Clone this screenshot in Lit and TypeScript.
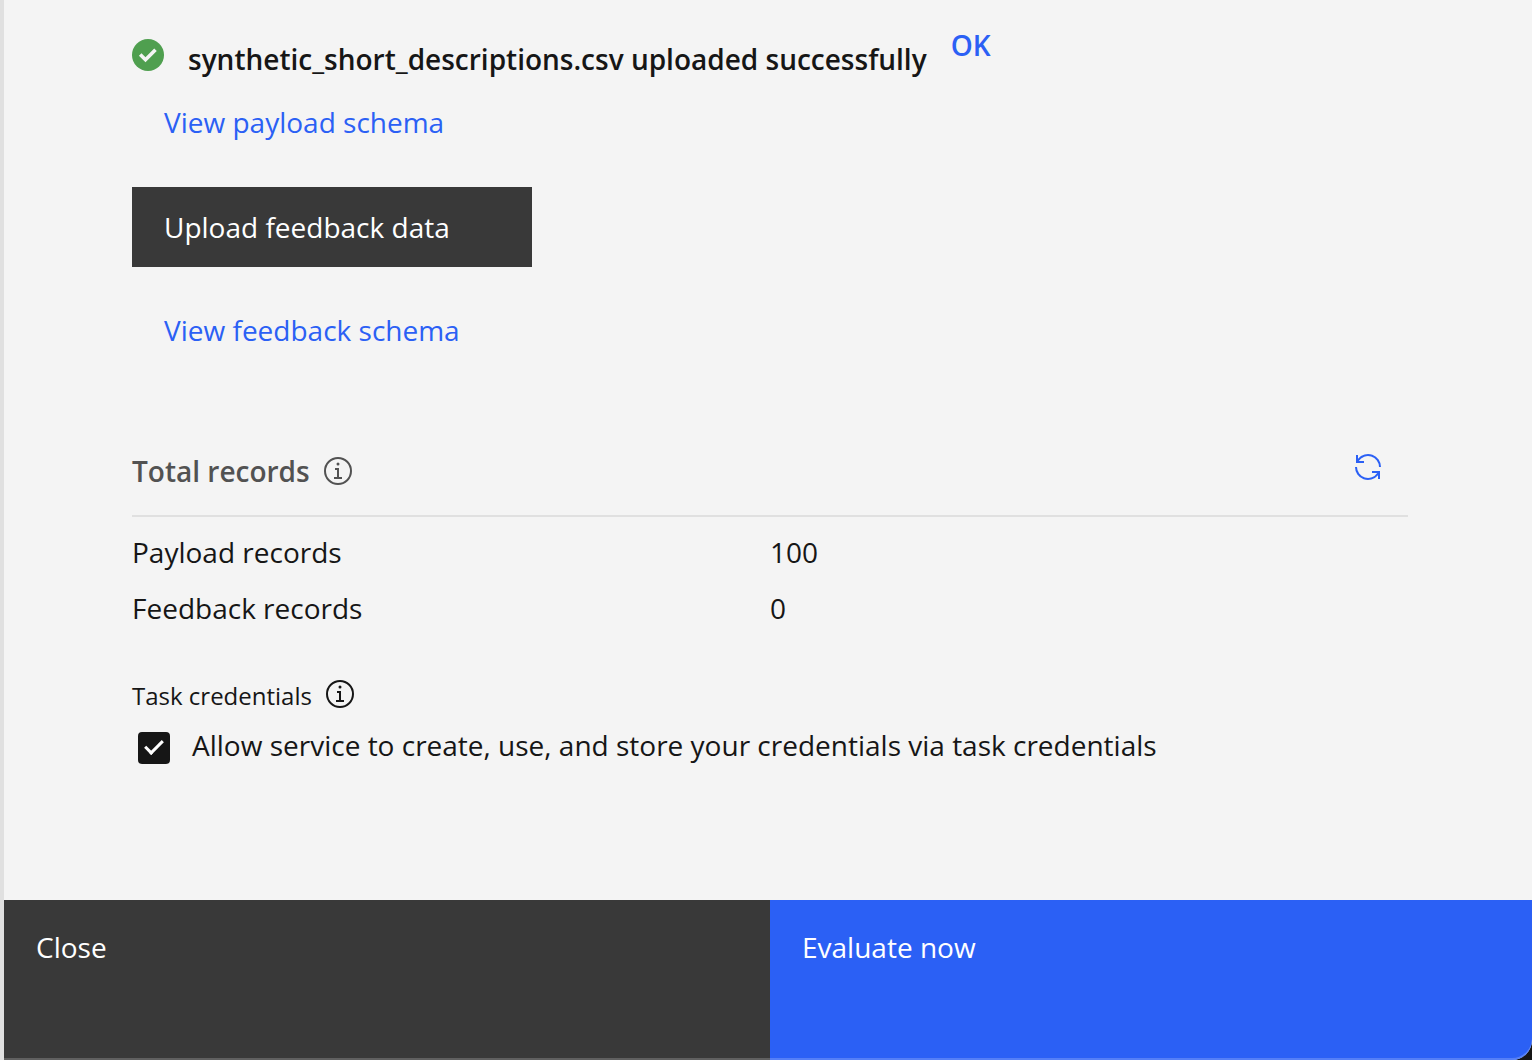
import { LitElement, html, css } from "lit";
import { customElement, property, state } from "lit/decorators.js";

@customElement("info-icon")
class InfoIcon extends LitElement {
  static styles = css`
    :host { display: block; width: 32px; height: 32px; }
    .icon { display: block; width: 32px; height: 32px; fill: currentColor; }
  `;
  render() {
    return html`<svg class="icon" viewBox="0 0 32 32" aria-hidden="true">
      <path d="M17 22v-9h-4v2h2v7h-3v2h8v-2zM16 7.5a1.5 1.5 0 1 0 1.5 1.5A1.5 1.5 0 0 0 16 7.5z" />
      <path d="M16 30a14 14 0 1 1 14-14 14 14 0 0 1-14 14zm0-26a12 12 0 1 0 12 12A12 12 0 0 0 16 4z" />
    </svg>`;
  }
}

@customElement("records-table")
class RecordsTable extends LitElement {
  @property({ attribute: false }) rows: { label: string; count: number }[] = [];

  static styles = css`
    :host { display: block; }
    .table { width: 100%; table-layout: fixed; border-collapse: collapse; }
    .cell { width: 50%; height: 56px; padding: 0; text-align: left; font-weight: 400; line-height: 36px; }
  `;
  render() {
    return html`<table class="table" aria-label="Total records">
      <tbody>
        ${this.rows.map(
          (r) => html`<tr><th class="cell" scope="row">${r.label}</th><td class="cell">${r.count}</td></tr>`
        )}
      </tbody>
    </table>`;
  }
}

@customElement("app-root")
class AppRoot extends LitElement {
  @state() private allowed = true;

  private records = [
    { label: "Payload records", count: 100 },
    { label: "Feedback records", count: 0 },
  ];

  static styles = css`
    :host { display: block; background: #161616; }
    *, *::before { box-sizing: border-box; }
    .panel {
      position: relative;
      display: flex;
      flex-direction: column;
      min-height: 100vh;
      border-left: 4px solid #e0e0e0;
      border-bottom-right-radius: 20px;
      overflow: hidden;
      background: #f4f4f4;
      color: #161616;
      font: 400 28px/36px "Open Sans", sans-serif;
    }
    .panel::after {
      content: "";
      position: absolute;
      inset: 0;
      border-bottom-right-radius: 20px;
      box-shadow: inset 0 -2px 0 rgba(255, 255, 255, 0.2);
      pointer-events: none;
    }
    .content { flex: 1; display: flex; flex-direction: column; padding: 27px 124px 0 128px; }
    button { border: 0; padding: 0; margin: 0; font: inherit; text-align: left; cursor: pointer; }
    .notice { display: flex; align-items: flex-start; gap: 24px; padding-bottom: 27px; }
    .success { flex: none; width: 32px; height: 32px; margin-top: 12px; }
    .message { margin: 14px 0 0; font-size: 28px; font-weight: 600; line-height: 36px; }
    .ok { background: none; color: #2b60f5; font-weight: 600; }
    .link { align-self: flex-start; margin-left: 32px; color: #2b60f5; text-decoration: none; }
    .upload { width: 400px; height: 80px; margin: 47px 0 45px; padding: 0 32px; background: #393939; color: #fff; }
    .section { display: flex; align-items: center; gap: 12px; margin-top: 103px; padding-bottom: 24px; border-bottom: 2px solid #e0e0e0; color: #525252; }
    .title { margin: 0; font-size: 28px; font-weight: 600; line-height: 36px; }
    .refresh { width: 32px; height: 32px; margin: 0 24px 8px auto; background: none; color: #2b60f5; }
    .refresh-icon { display: block; width: 32px; height: 32px; fill: currentColor; }
    .records { margin: 7px 0 42px; }
    .task { display: flex; align-items: flex-start; gap: 12px; font-size: 24px; line-height: 36px; }
    .consent { display: flex; align-items: flex-start; gap: 22px; margin: 13px 0 0 6px; }
    .check {
      appearance: none;
      flex: none;
      width: 32px;
      height: 32px;
      margin: 5px 0 0;
      border: 2px solid #161616;
      border-radius: 4px;
      display: grid;
      place-items: center;
    }
    .check:checked { background: #161616; }
    .check:checked::before {
      content: "";
      width: 18px;
      height: 10px;
      border: solid #fff;
      border-width: 0 0 3px 3px;
      transform: translateY(-3px) rotate(-45deg);
    }
    .footer { display: grid; grid-template-columns: 766fr 762fr; height: 160px; }
    .action { display: flex; align-items: flex-start; padding: 29px 32px; color: #fff; }
    .close { background: #393939; }
    .evaluate { background: #2b60f5; }
  `;

  render() {
    return html`<main class="panel">
      <div class="content">
        <div class="notice" role="status">
          <svg class="success" viewBox="0 0 32 32" aria-hidden="true">
            <circle cx="16" cy="16" r="16" fill="#4f9f4f" />
            <path d="M8.2 15.5l5.3 5.3L23.5 10.8" fill="none" stroke="#f4f4f4" stroke-width="3.6" />
          </svg>
          <p class="message">synthetic_short_descriptions.csv uploaded successfully</p>
          <button class="ok" type="button">OK</button>
        </div>
        <a class="link" href="#payload">View payload schema</a>
        <button class="upload" type="button">Upload feedback data</button>
        <a class="link" href="#feedback">View feedback schema</a>
        <div class="section">
          <h2 class="title">Total records</h2>
          <info-icon></info-icon>
          <button class="refresh" type="button" aria-label="Refresh records">
            <svg class="refresh-icon" viewBox="0 0 32 32" aria-hidden="true">
              <path d="M12 10H6.78A11 11 0 0 1 27 16h2A13 13 0 0 0 6 7.68V4H4v8h8zM20 22h5.22A11 11 0 0 1 5 16H3a13 13 0 0 0 23 8.32V28h2v-8h-8z" />
            </svg>
          </button>
        </div>
        <records-table class="records" .rows=${this.records}></records-table>
        <div class="task"><span>Task credentials</span><info-icon></info-icon></div>
        <div class="consent">
          <input
            class="check"
            id="allow"
            type="checkbox"
            .checked=${this.allowed}
            @change=${(e: Event) => (this.allowed = (e.target as HTMLInputElement).checked)}
          />
          <label for="allow">Allow service to create, use, and store your credentials via task credentials</label>
        </div>
      </div>
      <footer class="footer">
        <button class="action close" type="button">Close</button>
        <button class="action evaluate" type="button">Evaluate now</button>
      </footer>
    </main>`;
  }
}
